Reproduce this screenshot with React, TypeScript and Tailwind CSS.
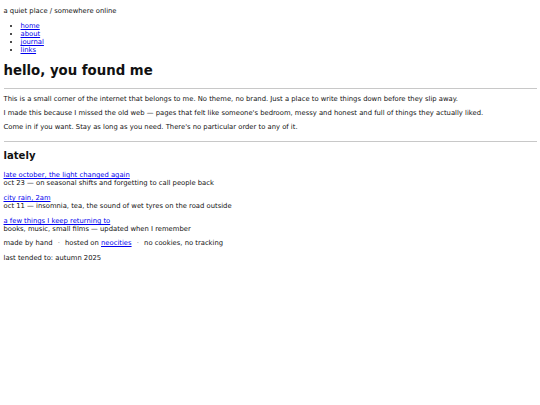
const navLinks = ["home", "about", "journal", "links"];

const posts = [
  {
    title: "late october, the light changed again",
    meta: "oct 23 — on seasonal shifts and forgetting to call people back",
  },
  {
    title: "city rain, 2am",
    meta: "oct 11 — insomnia, tea, the sound of wet tyres on the road outside",
  },
  {
    title: "a few things I keep returning to",
    meta: "books, music, small films — updated when I remember",
  },
];

export default function App() {
  return (
    <div className="min-h-screen bg-white px-[3.5px] pt-[7px] text-[6.8px] leading-[8px] text-[#111] font-['DejaVu_Sans',Verdana,sans-serif]">
      <header>
        <p>a quiet place / somewhere online</p>
        <ul className="list-disc pl-[17px] mt-[7px]">
          {navLinks.map((l) => (
            <li key={l}>
              <a href="#" className="text-[#0000ee] underline">
                {l}
              </a>
            </li>
          ))}
        </ul>
      </header>

      <main>
        <h1 className="mt-[9px] text-[13.3px] font-bold leading-[16px]">hello, you found me</h1>
        <hr className="mt-[9px] border-t border-[#c8c8c8]" />

        <p className="mt-[6px]">
          This is a small corner of the internet that belongs to me. No theme, no brand. Just a place to write things
          down before they slip away.
        </p>
        <p className="mt-[6px]">
          I made this because I missed the old web — pages that felt like someone's bedroom, messy and honest and full
          of things they actually liked.
        </p>
        <p className="mt-[6px]">Come in if you want. Stay as long as you need. There's no particular order to any of it.</p>

        <hr className="mt-[10px] border-t border-[#c8c8c8]" />

        <h2 className="mt-[8px] text-[10.1px] font-bold leading-[12px]">lately</h2>

        <div className="mt-[9px] flex flex-col gap-[7px]">
          {posts.map((p) => (
            <div key={p.title}>
              <a href="#" className="text-[#0000ee] underline">
                {p.title}
              </a>
              <br />
              {p.meta}
            </div>
          ))}
        </div>
      </main>

      <footer className="mt-[6px]">
        <p>
          made by hand <span className="text-[#777] px-[3px]">·</span> hosted on{" "}
          <a href="#" className="text-[#0000ee] underline">
            neocities
          </a>{" "}
          <span className="text-[#777] px-[3px]">·</span> no cookies, no tracking
        </p>
        <p className="mt-[7px]">last tended to: autumn 2025</p>
      </footer>
    </div>
  );
}
